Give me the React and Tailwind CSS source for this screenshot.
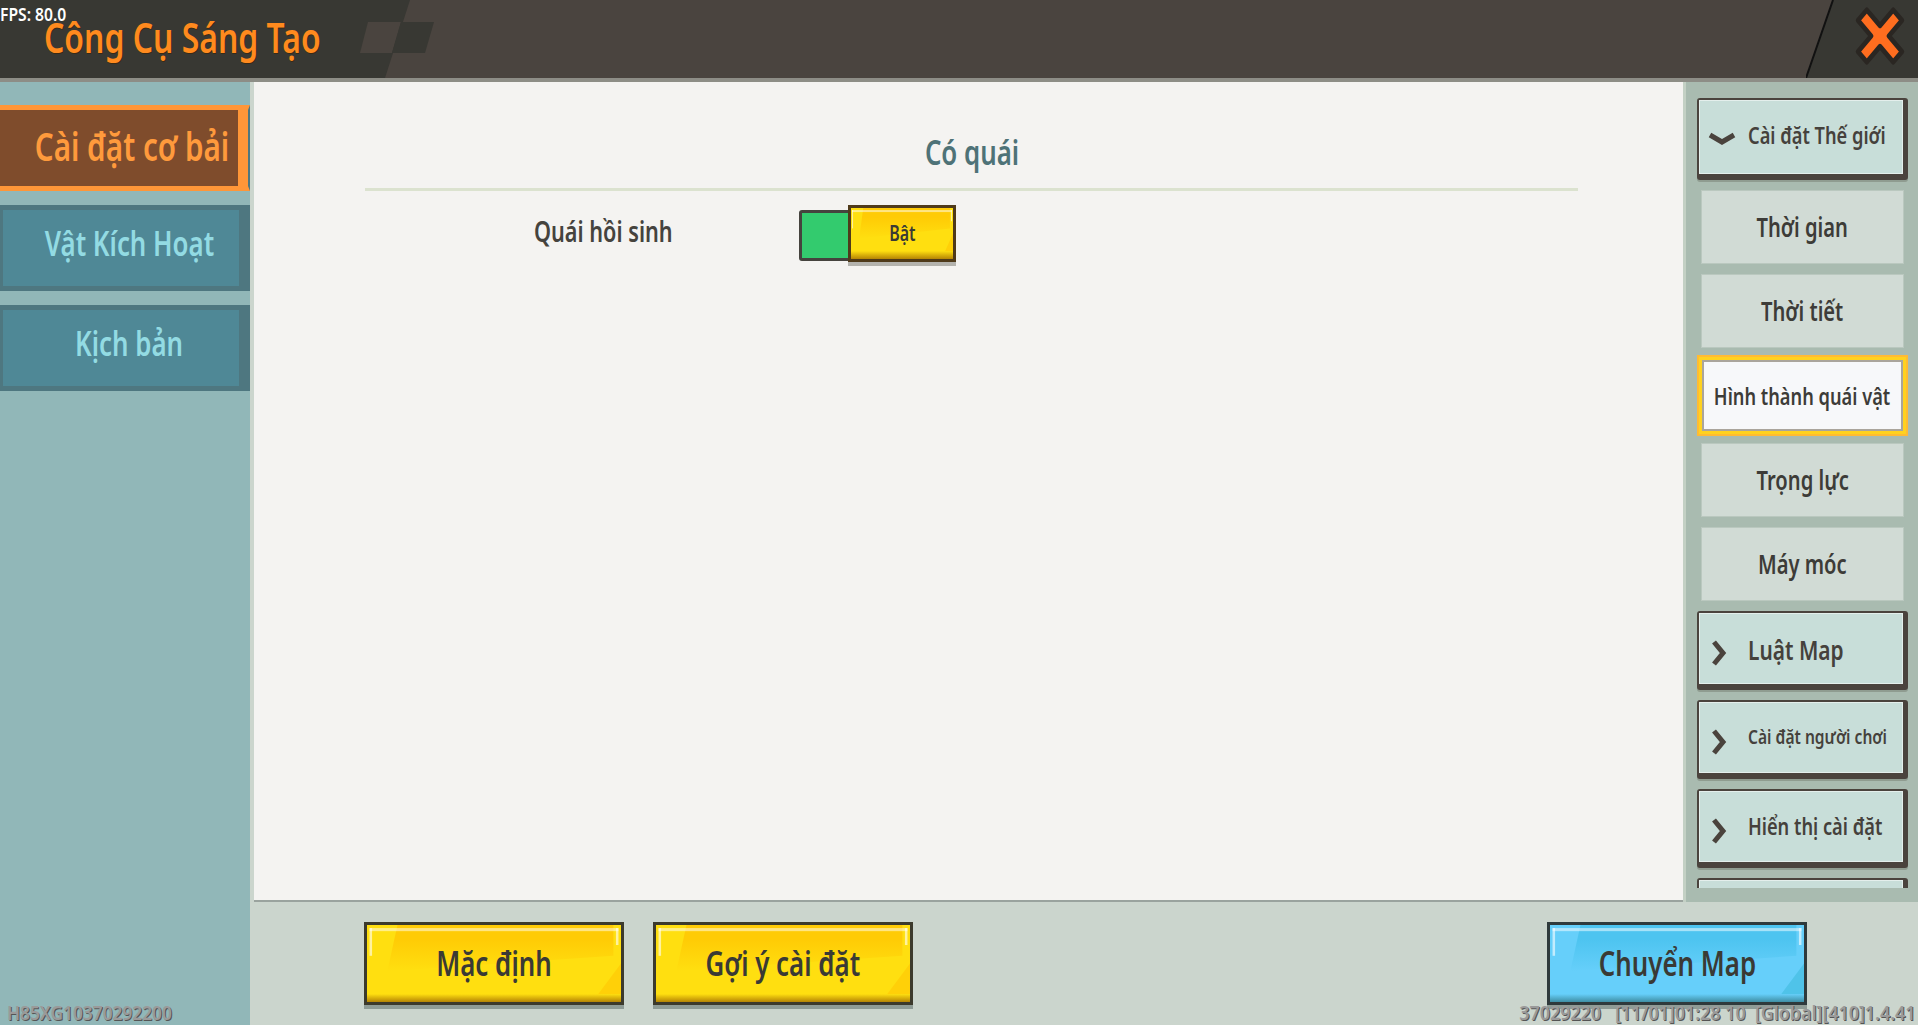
import React from 'react';

// the game font is a condensed one, so the text gets squeezed sideways
const T = ({ children, left, x = 'scale-x-[0.76]' }) => (
  <span className={`inline-block shrink-0 whitespace-pre ${x} ${left ? 'origin-left' : 'origin-center'}`}>{children}</span>
);

// glossy yellow / blue game button
const GlossButton = ({ label, blue = false, className = '', textClass = 'text-[34px]' }) => {
  const c = blue
    ? { id: 'glossBlue', border: 'border-[#2f3a3c]', face: 'bg-[#66cffa]', top: '#4dc4f0', corner: '#4fc3e9', line: 'from-[#66cffa] to-[#3f8fa5]' }
    : { id: 'glossYellow', border: 'border-[#3c3a2c]', face: 'bg-[#ffdf10]', top: '#ffcb05', corner: '#ffd008', line: 'from-[#ffdf10] to-[#b58505]' };
  return (
    <div className={`relative shadow-[0_4px_0_#8f9c96] border-[3px] ${c.border} ${c.face} ${className}`}>
      <svg className="absolute inset-0 h-full w-full" viewBox="0 0 100 100" preserveAspectRatio="none">
        <defs>
          <linearGradient id={c.id} x1="0" y1="0" x2="0" y2="1">
            <stop offset="0.3" stopColor={c.top} />
            <stop offset="1" stopColor={c.top} stopOpacity="0" />
          </linearGradient>
        </defs>
        <polygon points="12,0 97,0 97,40 8,60" fill={`url(#${c.id})`} />
        <polygon points="100,50 100,90 91,90" fill={c.corner} />
        <rect x="1" y="4" width="98" height="4" fill="#fff" opacity="0.5" />
        <rect x="1" y="4" width="1" height="36" fill="#fff" opacity="0.6" />
        <rect x="98" y="4" width="1" height="22" fill="#fff" opacity="0.6" />
      </svg>
      <div className={`absolute bottom-0 left-0 right-0 h-[8px] bg-gradient-to-b ${c.line}`} />
      <div className={`relative flex h-full items-center justify-center font-semibold text-[#3a3a35] ${textClass}`}>
        <T>{label}</T>
      </div>
    </div>
  );
};

const SideTab = ({ label, active }) => {
  if (active) {
    return (
      <div className="flex h-[86px] items-center justify-end border-y-[5px] border-r-[2px] border-y-[#ff9638] border-r-[#4e7780] bg-[#ff9638] pr-[10px]">
        <div className="flex h-full w-[238px] items-center justify-center bg-[#7f4c2c] pb-[4px] pl-[26px] text-[39px] font-semibold text-[#ff9a3c]">
          <T>{label}</T>
        </div>
      </div>
    );
  }
  return (
    <div className="flex h-[86px] items-center bg-[#4e7780] pb-[1px] pl-[3px] pr-[11px]">
      <div className="flex h-[76px] w-full items-center justify-center bg-[#4f8896] pb-[8px] pl-[16px] text-[34px] font-semibold text-[#93dbe3]">
        <T>{label}</T>
      </div>
    </div>
  );
};

const SubItem = ({ label, selected, textClass = 'text-[26.5px]' }) => {
  if (selected) {
    return (
      <div className="-my-[3px] h-[81px] shrink-0 bg-[#ffbb33] p-[2px]">
        <div className="h-full border-[3px] border-[#ffd21f]">
          <div className={`flex h-full items-center justify-center border-2 border-[#aaa59c] bg-[#f7f8fa] font-semibold text-[#3d3c38] ${textClass}`}>
            <T>{label}</T>
          </div>
        </div>
      </div>
    );
  }
  return (
    <div className={`mx-[4px] flex h-[74px] shrink-0 items-center justify-center border border-[#bac8bf] bg-[#d1dbd5] pt-[2px] font-semibold text-[#3d3c38] ${textClass}`}>
      <T>{label}</T>
    </div>
  );
};

const Chevron = ({ open }) => (
  <svg className="absolute left-[6px] top-1/2 h-[34px] w-[34px] -translate-y-1/2" viewBox="0 0 34 34" fill="none" stroke="#4a433d" strokeWidth="5">
    {open ? <path d="M5 15 L17 22 L29 15" /> : <path d="M9 10 L18 21 L9 32" />}
  </svg>
);

const GroupItem = ({ label, open, height = 'h-[79px]', textClass = 'text-[20px]' }) => (
  <div className={`relative shrink-0 rounded-[3px] border-[2px] border-b-[6px] border-r-[5px] border-[#4a433d] bg-[#c8ded9] shadow-[0_2px_0_#8f9c90] ${height}`}>
    <div className="absolute inset-0 border border-[#e4efec]" />
    <Chevron open={open} />
    <div className={`relative flex h-full items-center pl-[49px] font-semibold text-[#45413c] ${textClass}`}>
      {label && <T left>{label}</T>}
    </div>
  </div>
);

export default function App() {
  return (
    <div className="relative flex h-screen w-full flex-col overflow-hidden bg-[#cbd5cd] font-['Noto_Sans',sans-serif]">
      {/* header */}
      <div className="relative h-[82px] shrink-0 border-b-[4px] border-[#8d8d86] bg-[#4a443f]">
        <svg className="absolute left-0 top-0 h-[78px] w-[440px]" viewBox="0 0 440 78">
          <polygon points="0,0 410,0 385,78 0,78" fill="#383833" />
          <polygon points="368,22 401,22 392,53 360,53" fill="#4a443f" />
          <polygon points="401,22 434,22 425,53 392,53" fill="#383833" />
        </svg>
        <svg className="absolute right-0 top-0 h-[78px] w-[112px]" viewBox="0 0 112 78">
          <polygon points="27,0 112,0 112,78 0,78" fill="#383833" />
          <path d="M27 0 L0 78" stroke="#111" strokeWidth="2" />
          <polygon
            points="-15,-25 0,-10 15,-25 25,-15 10,0 25,15 15,25 0,10 -15,25 -25,15 -10,0 -25,-15"
            transform="translate(74 36) scale(0.88 1.04)"
            fill="#ff6d1f"
            stroke="#2a2622"
            strokeWidth="5"
            strokeLinejoin="round"
          />
        </svg>
        <div className="relative flex h-[78px] items-center pb-[6px] pl-[44px] text-[42px] font-semibold text-[#ff8a1e] [text-shadow:1px_1px_0_#3a2a14]">
          <T left>Công Cụ Sáng Tạo</T>
        </div>
      </div>

      <div className="flex min-h-0 flex-1">
        {/* left tabs */}
        <div className="flex w-[250px] shrink-0 flex-col gap-[14px] bg-[#91b7b8] pt-[23px]">
          <SideTab label="Cài đặt cơ bải" active />
          <SideTab label="Vật Kích Hoạt" />
          <SideTab label="Kịch bản" />
        </div>

        <div className="flex min-w-0 flex-1 flex-col">
          <div className="flex h-[820px] shrink-0">
            {/* content */}
            <div className="ml-[4px] flex-1 border-b-2 border-[#9aa39e] bg-[#f4f3f1] pl-[111px] pr-[105px] pt-[48px]">
              <div className="border-b-[3px] border-[#dbe2cf] pb-[14px] text-center text-[34px] font-semibold leading-[44px] text-[#4e7277]">
                <T>Có quái</T>
              </div>
              <div className="flex items-center pt-[14px]">
                <div className="w-[434px] pb-[5px] pl-[169px] text-[28.5px] font-semibold text-[#45433e]">
                  <T left>Quái hồi sinh</T>
                </div>
                <div className="relative flex items-center">
                  <div className="mt-[3px] h-[51px] w-[55px] rounded-[3px] border-[3px] border-[#45433e] bg-[#33cb6e]" />
                  <GlossButton label="Bật" className="-ml-[6px] h-[57px] w-[108px] !border-[#4f3a1a] !shadow-[0_4px_0_#b4b3ae]" textClass="text-[21px]" />
                </div>
              </div>
            </div>

            {/* right tree */}
            <div className="w-[235px] shrink-0 border-l-[3px] border-[#c3d0c4] bg-[#a9bbb0] pl-[11px] pr-[10px] pt-[16px]">
              <div className="flex h-[790px] flex-col gap-[10px] overflow-hidden">
                <GroupItem label="Cài đặt Thế giới" open height="h-[82px]" textClass="pb-[4px] text-[24px]" />
                <SubItem label="Thời gian" />
                <SubItem label="Thời tiết" />
                <SubItem label="Hình thành quái vật" selected textClass="text-[24px]" />
                <SubItem label="Trọng lực" />
                <SubItem label="Máy móc" />
                <GroupItem label="Luật Map" textClass="pt-[2px] text-[27.5px]" />
                <GroupItem label="Cài đặt người chơi" textClass="pb-[3px] text-[20.5px]" />
                <GroupItem label="Hiển thị cài đặt" textClass="pb-[2px] text-[24px]" />
                <GroupItem label="" />
              </div>
            </div>
          </div>

          {/* bottom actions */}
          <div className="flex flex-1 items-start pt-[20px]">
            <GlossButton label="Mặc định" className="ml-[114px] h-[83px] w-[260px]" />
            <GlossButton label="Gợi ý cài đặt" className="ml-[29px] h-[83px] w-[260px]" />
            <GlossButton label="Chuyển Map" blue className="ml-[634px] h-[83px] w-[260px]" />
          </div>
        </div>
      </div>

      {/* debug text over everything */}
      <div className="absolute left-0 top-[2px] text-[18px] font-semibold leading-[24px] text-white">
        <T left x="scale-x-[0.87]">FPS: 80.0</T>
      </div>
      <div className="absolute bottom-0 left-[7px] text-[19px] font-semibold leading-[24px] text-[#9a9a9a] [text-shadow:1px_1px_0_#555]">
        <T left x="scale-x-[0.91]">H85XG10370292200</T>
      </div>
      <div className="absolute bottom-0 right-[2px] text-[19px] font-semibold leading-[24px] text-[#9a9a9a] [text-shadow:1px_1px_0_#555]">
        <span className="inline-block origin-right scale-x-[0.94] whitespace-pre">37029220   [11/01]01:28 10  [Global][410]1.4.41</span>
      </div>
    </div>
  );
}
